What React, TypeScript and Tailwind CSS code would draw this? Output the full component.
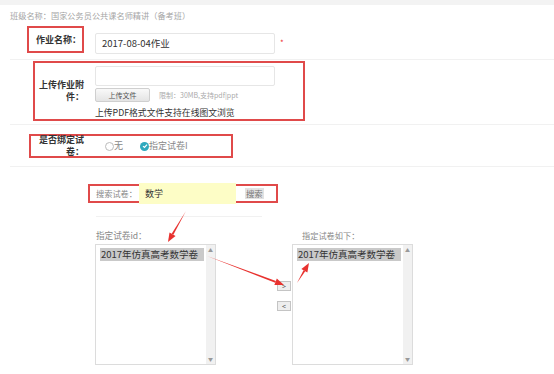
import React from "react";

type Pt = [number, number];

function Arrow({ from, to }: { from: Pt; to: Pt }) {
  const dx = to[0] - from[0];
  const dy = to[1] - from[1];
  const len = Math.sqrt(dx * dx + dy * dy);
  const ux = dx / len;
  const uy = dy / len;
  const head = 9;
  const half = 3.5;
  const bx = to[0] - ux * head;
  const by = to[1] - uy * head;
  const pts = [
    `${to[0]},${to[1]}`,
    `${bx - uy * half},${by + ux * half}`,
    `${bx + uy * half},${by - ux * half}`,
  ].join(" ");
  const tail = [
    `${from[0]},${from[1]}`,
    `${bx - uy * 1},${by + ux * 1}`,
    `${bx + uy * 1},${by - ux * 1}`,
  ].join(" ");
  return (
    <g fill="#e8322f">
      <polygon points={tail} />
      <polygon points={pts} />
    </g>
  );
}

function ListBox() {
  return (
    <div className="flex w-[121px] h-[121px] border border-[#dcdcdc] bg-white">
      <div className="flex-1 pt-[3px] pl-[4px]">
        <div className="w-[104px] h-[13px] bg-[#c9c9c9] text-[9.5px] leading-[13px] text-[#333] pl-[1px]">
          2017年仿真高考数学卷
        </div>
      </div>
      <div className="w-[9px] bg-[#f1f1f1] flex flex-col justify-between items-center py-[2px] text-[5px] leading-[6px] text-[#999]">
        <span>▲</span>
        <span>▼</span>
      </div>
    </div>
  );
}

export default function App() {
  return (
    <div className="relative w-[554px] h-[374px] overflow-hidden bg-white [text-spacing-trim:space-all] font-['Noto_Sans_CJK_SC','Microsoft_YaHei',sans-serif]">
      <div className="h-[5px] bg-[#f3f3f3]" />
      <p className="h-[21px] pl-[10px] pt-[5px] text-[8.2px] leading-[11px] text-[#a5a5a5]">
        班级名称：国家公务员公共课名师精讲（备考班）
      </p>

      {/* 作业名称 */}
      <div className="ml-[10px] h-[34px] flex items-start border-b border-[#f1f1f1]">
        <div className="ml-[17px] w-[57px] h-[27px] border-2 border-[#e04a4a] flex items-center justify-end pr-[1px]">
          <span className="text-[9px] font-bold text-[#333]">作业名称：</span>
        </div>
        <div className="ml-[11px] mt-[7px] w-[180px] h-[21px] border border-[#e6e6e6] rounded-[2px] pl-[6px] text-[9.5px] leading-[19px] text-[#333]">
          2017-08-04作业
        </div>
        <span className="ml-[5px] mt-[12px] text-[8px] leading-[10px] text-[#e33]">*</span>
      </div>

      {/* 上传作业附件 */}
      <div className="ml-[10px] h-[65px] border-b border-[#f1f1f1] pt-[1px]">
        <div className="ml-[23px] w-[272px] h-[60px] border-2 border-[#e04a4a] flex">
          <div className="w-[49px] self-center text-right text-[9px] leading-[12px] font-bold text-[#333]">
            上传作业附件：
          </div>
          <div className="ml-[11px] pt-[3px] flex flex-col">
            <div className="w-[180px] h-[20px] border border-[#e6e6e6] rounded-[2px]" />
            <div className="mt-[2px] flex items-center">
              <div className="w-[55px] h-[14px] border border-[#cfcfcf] rounded-[2px] bg-gradient-to-b from-[#f9f9f9] to-[#e4e4e4] flex items-center justify-center text-[7px] text-[#555]">
                上传文件
              </div>
              <span className="ml-[9px] text-[7px] text-[#aaa]">限制：30MB,支持pdf|ppt</span>
            </div>
            <p className="mt-[5px] text-[8.8px] leading-[12px] text-[#333]">
              上传PDF格式文件支持在线图文浏览
            </p>
          </div>
        </div>
      </div>

      {/* 是否绑定试卷 */}
      <div className="ml-[10px] h-[42px] border-b border-[#f1f1f1] pt-[9px]">
        <div className="ml-[19px] w-[204px] h-[24px] border-2 border-[#e04a4a] flex items-center">
          <div className="w-[53px] text-right text-[9px] leading-[12px] font-bold text-[#333]">
            是否绑定试卷：
          </div>
          <div className="ml-[21px] flex items-center text-[9px] text-[#888]">
            <span className="w-[9px] h-[9px] rounded-full border border-[#bbb]" />
            <span>无</span>
            <span className="ml-[17px] w-[9px] h-[9px] rounded-full bg-[#2fa9be] flex items-center justify-center">
              <svg width="6" height="6" viewBox="0 0 6 6">
                <path d="M1 3.1 L2.5 4.5 L5 1.6" stroke="white" strokeWidth="1.2" fill="none" />
              </svg>
            </span>
            <span>指定试卷I</span>
          </div>
        </div>
      </div>

      {/* 搜索试卷 */}
      <div className="ml-[88px] mt-[17px] w-[190px] h-[19px] border-2 border-[#e04a4a] flex items-center">
        <span className="pl-[6px] text-[8.2px] text-[#888]">搜索试卷：</span>
        <div className="ml-[2px] w-[97px] h-[21px] bg-[#fdfdc6] pl-[6px] text-[9px] leading-[21px] text-[#333]">
          数学
        </div>
        <span className="ml-[9px] px-[1px] bg-[#e2e2e2] text-[8.4px] leading-[11px] text-[#777]">搜索</span>
      </div>
      <div className="ml-[96px] mt-[13px] w-[166px] h-px bg-[#f1f1f1]" />

      {/* 试卷列表 */}
      <div className="ml-[95px] mt-[12px] flex items-start">
        <div className="flex flex-col">
          <span className="pl-[1px] h-[12px] text-[8.6px] leading-[12px] text-[#888]">指定试卷id：</span>
          <div className="mt-[3px]">
            <ListBox />
          </div>
        </div>
        <div className="ml-[61px] mt-[52px] flex flex-col">
          <div className="w-[14px] h-[10px] border border-[#c4c4c4] bg-[#eee] flex items-center justify-center text-[7px] leading-none text-[#555]">
            &gt;
          </div>
          <div className="mt-[10px] w-[14px] h-[10px] border border-[#c4c4c4] bg-[#eee] flex items-center justify-center text-[7px] leading-none text-[#555]">
            &lt;
          </div>
        </div>
        <div className="ml-[1px] flex flex-col">
          <span className="pl-[10px] h-[12px] text-[8.2px] leading-[12px] text-[#888]">指定试卷如下：</span>
          <div className="mt-[3px]">
            <ListBox />
          </div>
        </div>
      </div>

      <svg className="absolute inset-0 pointer-events-none" width="554" height="374">
        <Arrow from={[186, 211]} to={[168, 242]} />
        <Arrow from={[207, 256]} to={[284, 285]} />
        <Arrow from={[297, 283]} to={[309, 263]} />
      </svg>
    </div>
  );
}
